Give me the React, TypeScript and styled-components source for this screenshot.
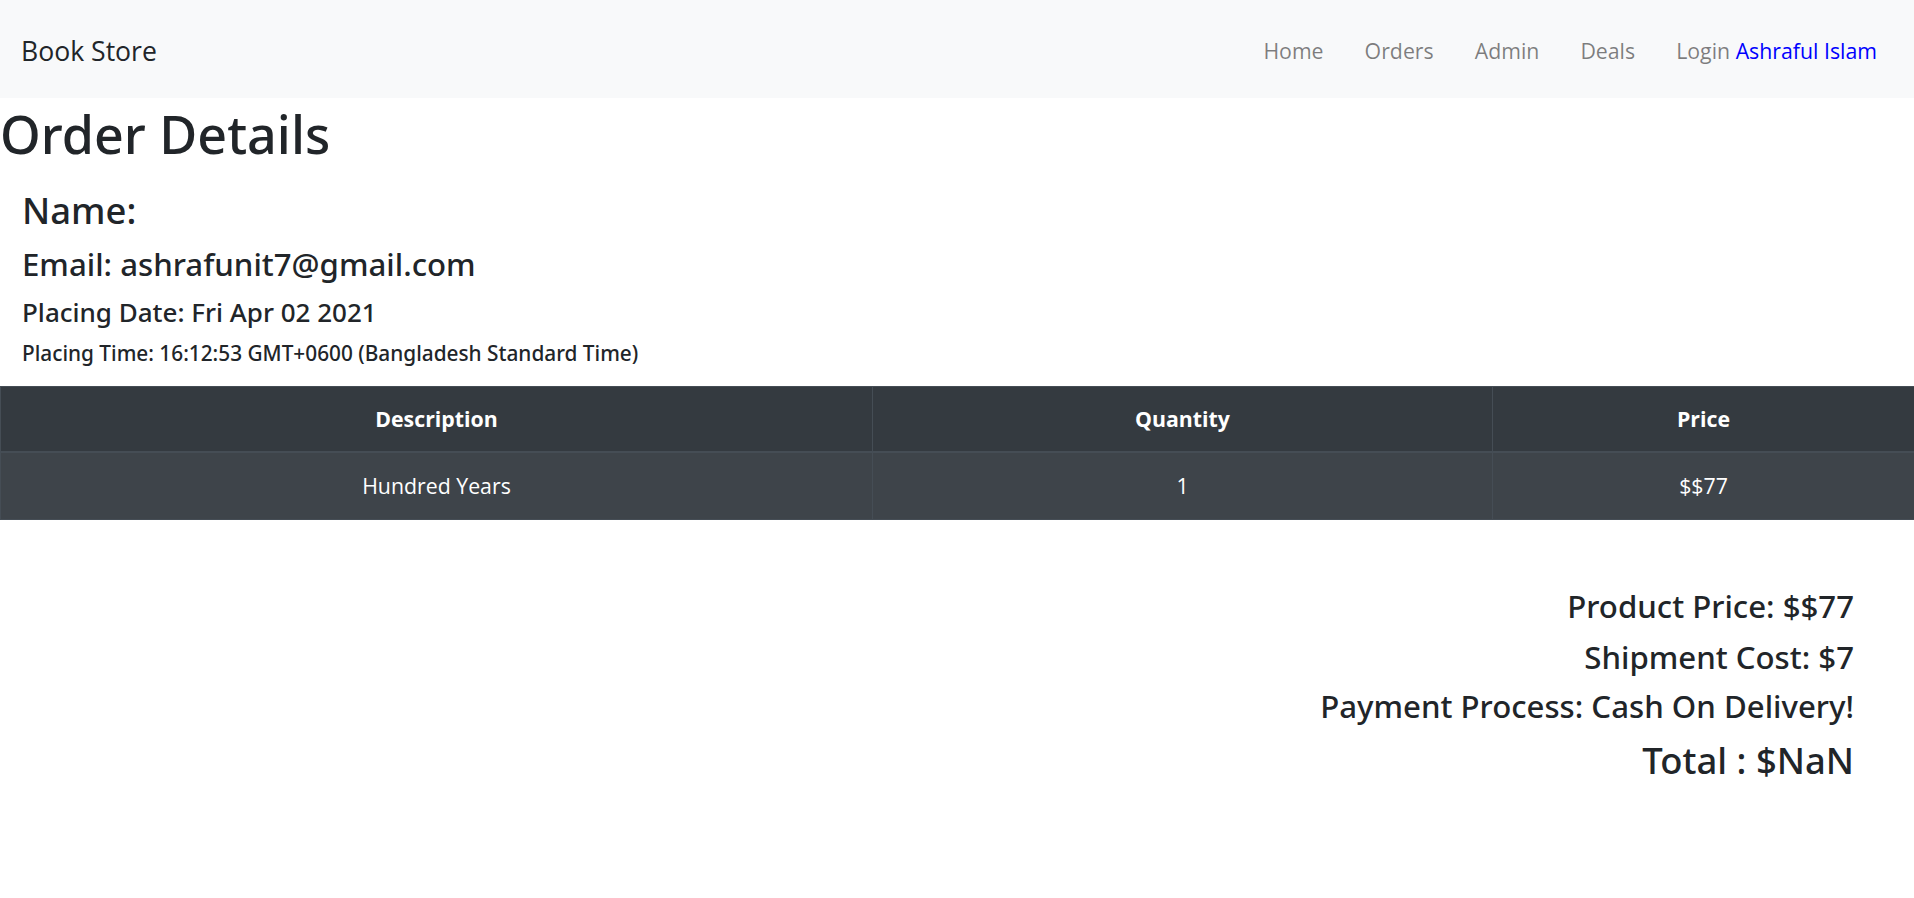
import React from "react";
import styled, { createGlobalStyle } from "styled-components";

const GlobalStyle = createGlobalStyle`
  html, body {
    margin: 0;
    padding: 0;
    background: #ffffff;
  }
  body {
    font-family: "Open Sans", "Noto Sans", sans-serif;
    color: #212529;
    font-size: 21.3px;
    line-height: 1.5;
  }
  * { box-sizing: border-box; }
`;

const Navbar = styled.nav`
  display: flex;
  align-items: center;
  justify-content: space-between;
  height: 98px;
  padding: 4px 37px 0 21px;
  background: #f8f9fa;
`;

const Brand = styled.a`
  font-size: 26.6px;
  line-height: 1.5;
  color: #212529;
  text-decoration: none;
  padding-top: 1px;
`;

const NavList = styled.ul`
  display: flex;
  gap: 41px;
  list-style: none;
  margin: 0;
  padding: 0;
`;

const NavItem = styled.li`
  font-size: 21.3px;
  line-height: 1.5;
  color: rgba(0, 0, 0, 0.5);
`;

const UserName = styled.span`
  color: #0000ff;
`;

const Title = styled.h1`
  margin: 5px 0 0;
  font-family: "Noto Sans", "Open Sans", sans-serif;
  font-size: 52px;
  font-weight: 500;
  line-height: 1.2;
`;

const Details = styled.section`
  padding: 0 22px;
`;

const Line = styled.div<{ $size: number; $gap: number }>`
  margin: ${(p) => p.$gap}px 0 0;
  font-family: "Noto Sans", "Open Sans", sans-serif;
  font-size: ${(p) => p.$size}px;
  font-weight: 500;
  line-height: 1.2;
`;

const Table = styled.table`
  width: 100%;
  margin-top: 20.5px;
  border-collapse: collapse;
  table-layout: fixed;
  background: #343a40;
  color: #ffffff;
  font-size: 21.3px;
`;

const Col = styled.col<{ $w: number }>`
  width: ${(p) => p.$w}px;
`;

const HeadCell = styled.th`
  padding: 16px 16.8px;
  line-height: 32px;
  border: 1px solid #454d55;
  border-bottom-width: 2px;
  font-weight: 700;
  text-align: center;
  vertical-align: middle;
`;

const BodyRow = styled.tr`
  background: #3e444a;
`;

const Cell = styled.td`
  padding: 16.8px;
  line-height: 32px;
  border: 1px solid #454d55;
  text-align: center;
  vertical-align: middle;
`;

const Summary = styled.section`
  display: flex;
  flex-direction: column;
  align-items: flex-end;
  margin-top: 68px;
  padding-right: 60px;
`;

export default function App() {
  return (
    <>
      <GlobalStyle />
      <Navbar>
        <Brand href="#">Book Store</Brand>
        <NavList>
          <NavItem>Home</NavItem>
          <NavItem>Orders</NavItem>
          <NavItem>Admin</NavItem>
          <NavItem>Deals</NavItem>
          <NavItem>
            Login <UserName>Ashraful Islam</UserName>
          </NavItem>
        </NavList>
      </Navbar>
      <Title>Order Details</Title>
      <Details>
        <Line as="h3" $size={36.4} $gap={23.5}>Name: </Line>
        <Line as="h4" $size={31.2} $gap={13.5}>Email: ashrafunit7@gmail.com</Line>
        <Line as="h5" $size={26} $gap={13.3}>Placing Date: Fri Apr 02 2021</Line>
        <Line as="h6" $size={20.8} $gap={12.6}>
          Placing Time: 16:12:53 GMT+0600 (Bangladesh Standard Time)
        </Line>
      </Details>
      <Table>
        <colgroup>
          <Col $w={872} />
          <Col $w={620} />
          <Col $w={422} />
        </colgroup>
        <thead>
          <tr>
            <HeadCell>Description</HeadCell>
            <HeadCell>Quantity</HeadCell>
            <HeadCell>Price</HeadCell>
          </tr>
        </thead>
        <tbody>
          <BodyRow>
            <Cell>Hundred Years</Cell>
            <Cell>1</Cell>
            <Cell>$$77</Cell>
          </BodyRow>
        </tbody>
      </Table>
      <Summary>
        <Line as="h4" $size={31.2} $gap={0}>Product Price: $$77</Line>
        <Line as="h4" $size={31.2} $gap={13.7}>Shipment Cost: $7</Line>
        <Line as="h4" $size={31.2} $gap={12.2}>Payment Process: Cash On Delivery!</Line>
        <Line as="h3" $size={36.4} $gap={13}>Total : $NaN</Line>
      </Summary>
    </>
  );
}
